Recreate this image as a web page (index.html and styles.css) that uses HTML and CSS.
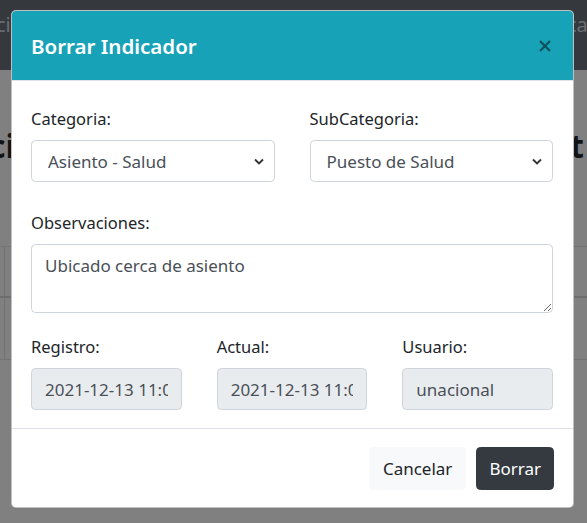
FILE: index.html
```html
<!DOCTYPE html>
<html lang="es">
<head>
<meta charset="utf-8">
<title>Borrar Indicador</title>
<link rel="stylesheet" href="styles.css">
</head>
<body>
<div class="page">
  <nav class="navbar">
    <span class="nav-left">ción</span>
    <span class="nav-right">cación</span>
  </nav>
  <div class="heading">
    <span class="heading-left">ci</span>
    <span class="heading-right">t</span>
  </div>
  <div class="bg-table">
    <div class="bg-row bg-head"><div class="bg-cell first"></div><div class="bg-cell"></div></div>
    <div class="bg-row bg-body"><div class="bg-cell first"></div><div class="bg-cell"></div></div>
  </div>
</div>

<div class="modal">
  <div class="modal-header">
    <h5 class="modal-title">Borrar Indicador</h5>
    <button class="close" type="button" aria-label="Close">
      <svg width="12" height="12" viewBox="0 0 12 12"><path d="M1 1 L11 11 M11 1 L1 11" stroke="#0c515c" stroke-width="2.2" fill="none"/></svg>
    </button>
  </div>
  <div class="modal-body">
    <div class="row row2col row-a">
      <div class="field">
        <label>Categoria:</label>
        <div class="select-wrap">
          <select class="control select"><option>Asiento - Salud</option></select>
          <svg class="chev" width="10" height="7" viewBox="0 0 10 7"><path d="M1 1.5 L5 5.5 L9 1.5" stroke="#333" stroke-width="1.8" fill="none"/></svg>
        </div>
      </div>
      <div class="field">
        <label>SubCategoria:</label>
        <div class="select-wrap">
          <select class="control select"><option>Puesto de Salud</option></select>
          <svg class="chev" width="10" height="7" viewBox="0 0 10 7"><path d="M1 1.5 L5 5.5 L9 1.5" stroke="#333" stroke-width="1.8" fill="none"/></svg>
        </div>
      </div>
    </div>
    <div class="field row-b">
      <label>Observaciones:</label>
      <textarea class="control textarea">Ubicado cerca de asiento</textarea>
    </div>
    <div class="row row3col">
      <div class="field">
        <label>Registro:</label>
        <input class="control readonly" type="text" value="2021-12-13 11:00:00" readonly>
      </div>
      <div class="field">
        <label>Actual:</label>
        <input class="control readonly" type="text" value="2021-12-13 11:00:00" readonly>
      </div>
      <div class="field">
        <label>Usuario:</label>
        <input class="control readonly" type="text" value="unacional" readonly>
      </div>
    </div>
  </div>
  <div class="modal-footer">
    <button class="btn btn-light" type="button">Cancelar</button>
    <button class="btn btn-dark" type="button">Borrar</button>
  </div>
</div>
</body>
</html>
```
FILE: styles.css
```css
* { box-sizing: border-box; }
html, body {
  margin: 0;
  padding: 0;
}
body {
  width: 587px;
  height: 523px;
  overflow: hidden;
  position: relative;
  background: #808080;
  font-family: "Noto Sans", "Open Sans", sans-serif;
  color: #212529;
}

/* background page under backdrop */
.page { width: 587px; }
.navbar {
  height: 70px;
  background: #35393d;
  display: flex;
  justify-content: space-between;
  align-items: flex-start;
  padding-top: 10px;
  overflow: hidden;
  font-size: 20px;
  line-height: 30px;
  color: #6a6e72;
}
.nav-left { margin-left: -4px; }
.nav-right { margin-right: -40px; }
.heading {
  margin-top: 54px;
  height: 44px;
  display: flex;
  justify-content: space-between;
  overflow: hidden;
  font-size: 32px;
  font-weight: 700;
  line-height: 44px;
  color: #121416;
}
.heading-left { margin-left: -11px; }
.heading-right { margin-right: 3px; }
.bg-table { margin-top: 78px; }
.bg-row { display: flex; }
.bg-head {
  height: 52px;
  border-top: 1px solid #737373;
  border-bottom: 2px solid #6e6e6e;
}
.bg-body {
  height: 62px;
  border-bottom: 1px solid #737373;
}
.bg-cell { flex: 1; }
.bg-cell.first {
  flex: 0 0 5px;
  border-right: 1px solid #737373;
}

/* modal */
.modal {
  position: absolute;
  left: 11px;
  top: 10px;
  width: 563px;
  background: #fff;
  border: 1px solid rgba(0, 0, 0, 0.25);
  border-radius: 5px;
  overflow: hidden;
}
.modal-header {
  height: 70px;
  padding: 0 20px 0 19px;
  background: #17a2b8;
  border-bottom: 1px solid #dee2e6;
  display: flex;
  align-items: center;
  justify-content: space-between;
}
.modal-title {
  margin: 0;
  font-size: 20.5px;
  font-weight: 600;
  color: #fff;
  line-height: 28px;
}
.close {
  border: 0;
  background: transparent;
  padding: 0;
  margin-right: 2px;
  display: flex;
}
.modal-body {
  padding: 25px 20px 18px 19px;
}
.row { display: grid; column-gap: 35px; }
.row2col { grid-template-columns: 1fr 1fr; }
.row3col { grid-template-columns: 1fr 1fr 1fr; }
.row-a { margin-bottom: 28px; }
.row-b { margin-bottom: 21px; }
.field label {
  display: block;
  font-size: 16.5px;
  line-height: 26px;
  margin-bottom: 8px;
  color: #212529;
}
.control {
  display: block;
  width: 100%;
  height: 42px;
  border: 1px solid #ced4da;
  border-radius: 4.4px;
  padding: 0 13px;
  font-family: "Noto Sans", "Open Sans", sans-serif;
  font-size: 17px;
  color: #495057;
  background: #fff;
  margin: 0;
}
.select-wrap { position: relative; }
.select {
  appearance: none;
  -webkit-appearance: none;
  padding-left: 16px;
}
.chev {
  position: absolute;
  right: 11px;
  top: 18px;
}
.textarea {
  height: 69px;
  padding: 8px 13px;
  line-height: 26px;
  resize: vertical;
}
.readonly {
  background: #e9ecef;
  overflow: hidden;
}
.modal-footer {
  border-top: 1px solid #dee2e6;
  padding: 18px 19px 17px;
  display: flex;
  justify-content: flex-end;
  gap: 10px;
}
.btn {
  height: 43px;
  border: 1px solid transparent;
  border-radius: 4.4px;
  padding: 0 13px;
  font-family: "Noto Sans", "Open Sans", sans-serif;
  font-size: 17px;
}
.btn-light {
  background: #f8f9fa;
  border-color: #f8f9fa;
  color: #212529;
}
.btn-dark {
  background: #343a40;
  border-color: #343a40;
  color: #fff;
  padding: 0 12px;
}
```
